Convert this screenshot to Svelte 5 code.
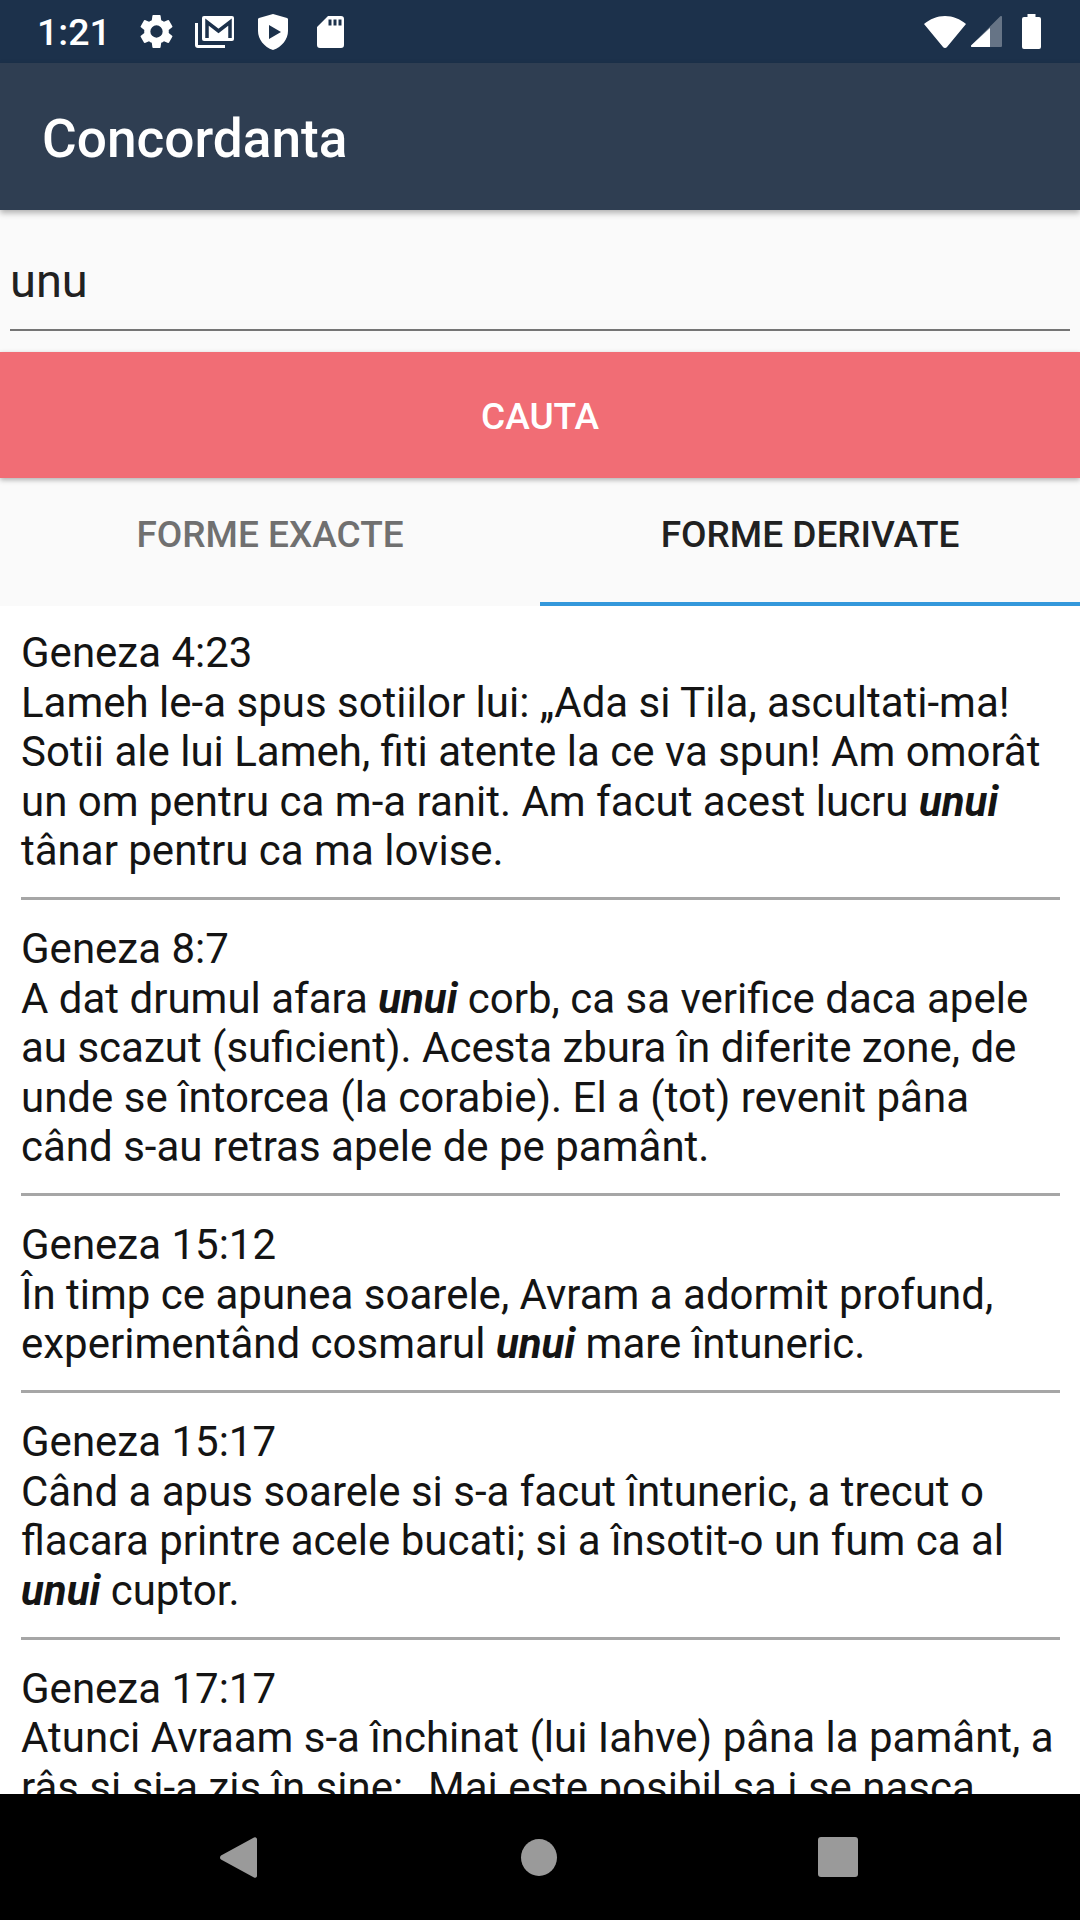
<script>
    const verses = [
        { ref: "Geneza 4:23", lines: [["Lameh le-a spus sotiilor lui: „Ada si Tila, ascultati-ma!"], ["Sotii ale lui Lameh, fiti atente la ce va spun! Am omorât"], ["un om pentru ca m-a ranit. Am facut acest lucru ", "unui"], ["tânar pentru ca ma lovise."]] },
        { ref: "Geneza 8:7", lines: [["A dat drumul afara ", "unui", " corb, ca sa verifice daca apele"], ["au scazut (suficient). Acesta zbura în diferite zone, de"], ["unde se întorcea (la corabie). El a (tot) revenit pâna"], ["când s-au retras apele de pe pamânt."]] },
        { ref: "Geneza 15:12", lines: [["În timp ce apunea soarele, Avram a adormit profund,"], ["experimentând cosmarul ", "unui", " mare întuneric."]] },
        { ref: "Geneza 15:17", lines: [["Când a apus soarele si s-a facut întuneric, a trecut o"], ["flacara printre acele bucati; si a însotit-o un fum ca al"], ["", "unui", " cuptor."]] },
        { ref: "Geneza 17:17", lines: [["Atunci Avraam s-a închinat (lui Iahve) pâna la pamânt, a"], ["râs si si-a zis în sine: „Mai este posibil sa i se nasca"]] }
    ];
</script>

<div class="screen">
    <div class="status">
        <span class="time">1:21</span>
        <svg class="gear" width="41" height="41" viewBox="0 0 24 24"><path fill="#fff" d="M19.14 12.94c.04-.3.06-.61.06-.94s-.02-.64-.07-.94l2.03-1.58a.49.49 0 0 0 .12-.61l-1.92-3.32a.49.49 0 0 0-.59-.22l-2.39.96a7 7 0 0 0-1.62-.94l-.36-2.54a.48.48 0 0 0-.48-.41h-3.84a.47.47 0 0 0-.47.41l-.36 2.54c-.59.24-1.13.57-1.62.94l-2.39-.96a.48.48 0 0 0-.59.22L2.74 8.87a.47.47 0 0 0 .12.61l2.03 1.58c-.05.3-.09.63-.09.94s.02.64.07.94l-2.03 1.58a.49.49 0 0 0-.12.61l1.92 3.32c.12.22.37.29.59.22l2.39-.96c.5.38 1.03.7 1.62.94l.36 2.54c.05.24.24.41.48.41h3.84c.24 0 .44-.17.47-.41l.36-2.54c.59-.24 1.13-.56 1.62-.94l2.39.96c.22.08.47 0 .59-.22l1.92-3.32a.47.47 0 0 0-.12-.61l-2.01-1.58zM12 15.6A3.6 3.6 0 1 1 12 8.4a3.6 3.6 0 0 1 0 7.200z"/></svg>
        <svg class="mail" width="39" height="32" viewBox="0 0 39 32"><path fill="#fff" d="M0 7h3v22h27v3H3a3 3 0 0 1-3-3z"/><rect x="7" y="0" width="32" height="25" rx="2" fill="#fff"/><path fill="none" stroke="#1c314b" stroke-width="3.500" d="M12 22V6l11.500 9L35 6v16"/></svg>
        <svg class="shield" width="30" height="36" viewBox="0 0 30 36"><path fill="#fff" fill-rule="evenodd" d="M15 0l14 4a1.500 1.500 0 0 1 1 1.500V17c0 8-6 16-15 19C6 33 0 25 0 17V5.500A1.500 1.500 0 0 1 1 4zm-4 11v14l12-7z"/></svg>
        <svg class="sd" width="27" height="32" viewBox="0 0 27 32"><path fill="#fff" fill-rule="evenodd" d="M11 0h13a3 3 0 0 1 3 3v26a3 3 0 0 1-3 3H3a3 3 0 0 1-3-3V11zm.500 3.500v6h3v-6zm5 0v6h3v-6zm5 0v6h3v-6z"/></svg>
        <span class="spacer"></span>
        <svg class="wifi" width="42" height="32" viewBox="0 0 42 32"><path fill="#fff" d="M21 0c8 0 15 3 21 8L23 31a2.500 2.500 0 0 1-4 0L0 8C6 3 13 0 21 0z"/></svg>
        <svg class="signal" width="31" height="31" viewBox="0 0 31 31"><path fill="#fff" fill-opacity=".33" d="M31 1v29a1 1 0 0 1-1 1H1a1 1 0 0 1-.7-1.700L29.300.300A1 1 0 0 1 31 1z"/><path fill="#fff" d="M19 12v19H1a1 1 0 0 1-.7-1.700z"/></svg>
        <svg class="battery" width="19" height="35" viewBox="0 0 19 35"><path fill="#fff" d="M5.500 0h8v3H17a2 2 0 0 1 2 2v28a2 2 0 0 1-2 2H2a2 2 0 0 1-2-2V5a2 2 0 0 1 2-2h3.500z"/></svg>
    </div>

    <header class="appbar">Concordanta</header>

    <div class="search">
        <div class="field">unu</div>
    </div>

    <button class="go">CAUTA</button>

    <div class="tabs">
        <div class="tab">FORME EXACTE</div>
        <div class="tab active">FORME DERIVATE</div>
    </div>

    <div class="list">
        {#each verses as v}
            <div class="verse">
                <div>{v.ref}</div>
                {#each v.lines as line}
                    <div>
                        {#each line as part, i}
                            {#if i % 2 === 1}<b>{part}</b>{:else}{part}{/if}
                        {/each}
                    </div>
                {/each}
            </div>
        {/each}
    </div>

    <nav class="navbar">
        <svg width="37" height="41" viewBox="0 0 37 41"><path fill="#9a9a9a" d="M34 .500a2 2 0 0 1 3 1.500v37a2 2 0 0 1-3 1.500L1 22.500a2.500 2.500 0 0 1 0-4z"/></svg>
        <span class="home"></span>
        <span class="recent"></span>
    </nav>
</div>

<style>
    :global(body) {
        background: #fff;
    }

    .screen {
        width: 1080px;
        height: 1920px;
        display: flex;
        flex-direction: column;
        overflow: hidden;
        font-family: Roboto, sans-serif;
        background: #fff;
    }

    .status {
        height: 63px;
        flex: none;
        display: flex;
        align-items: center;
        padding: 0 39px 0 37px;
        background: #1c314b;
        color: #fff;
    }

    .time {
        font-size: 37.500px;
        font-weight: 500;
        width: 99px;
    }

    .gear {
        margin-right: 18px;
    }

    .mail {
        margin-right: 24px;
    }

    .shield {
        margin-right: 29px;
    }

    .spacer {
        flex: 1;
    }

    .wifi {
        margin-right: 5px;
    }

    .signal {
        margin-right: 20px;
    }

    .appbar {
        height: 147px;
        flex: none;
        box-sizing: border-box;
        display: flex;
        align-items: center;
        padding: 4px 0 0 42px;
        background: #2f3e52;
        color: #fff;
        font-size: 53.200px;
        font-weight: 500;
        box-shadow: 0 3px 6px rgba(0, 0, 0, 0.3);
        position: relative;
    }

    .search {
        height: 142px;
        flex: none;
        padding: 0 10px;
        background: #fafafa;
    }

    .field {
        height: 121px;
        box-sizing: border-box;
        padding-top: 41px;
        font-size: 47px;
        line-height: 60px;
        color: #212121;
        border-bottom: 2px solid #757575;
    }

    .go {
        height: 126px;
        flex: none;
        border: none;
        padding: 2px 0 0;
        background: #f16d75;
        color: #fff;
        font-family: inherit;
        font-size: 37px;
        font-weight: 500;
        box-shadow: 0 2px 5px rgba(0, 0, 0, 0.3);
        position: relative;
    }

    .tabs {
        height: 128px;
        flex: none;
        display: flex;
        background: #fafafa;
    }

    .tab {
        flex: 1;
        display: flex;
        align-items: center;
        justify-content: center;
        box-sizing: border-box;
        padding-bottom: 16px;
        font-size: 37px;
        font-weight: 500;
        color: #707070;
    }

    .tab.active {
        color: #212121;
        border-bottom: 4px solid #3498db;
        padding-bottom: 12px;
    }

    .list {
        flex: 1;
        min-height: 0;
        overflow: hidden;
        padding: 0 20px 0 21px;
        background: #fff;
    }

    .verse {
        padding: 24px 0 21.500px;
        border-bottom: 3px solid #a6a6a6;
        font-size: 42px;
        line-height: 49.500px;
        color: #141414;
        white-space: nowrap;
    }

    .verse:first-child {
        padding-top: 22px;
    }

    .verse b {
        font-style: italic;
        font-weight: 700;
    }

    .navbar {
        height: 126px;
        flex: none;
        display: flex;
        align-items: center;
        padding-left: 220px;
        background: #000;
    }

    .home {
        width: 36px;
        height: 37px;
        margin-left: 264px;
        border-radius: 50%;
        background: #9a9a9a;
    }

    .recent {
        width: 40px;
        height: 40px;
        margin-left: 261px;
        border-radius: 3px;
        background: #9a9a9a;
    }
</style>
